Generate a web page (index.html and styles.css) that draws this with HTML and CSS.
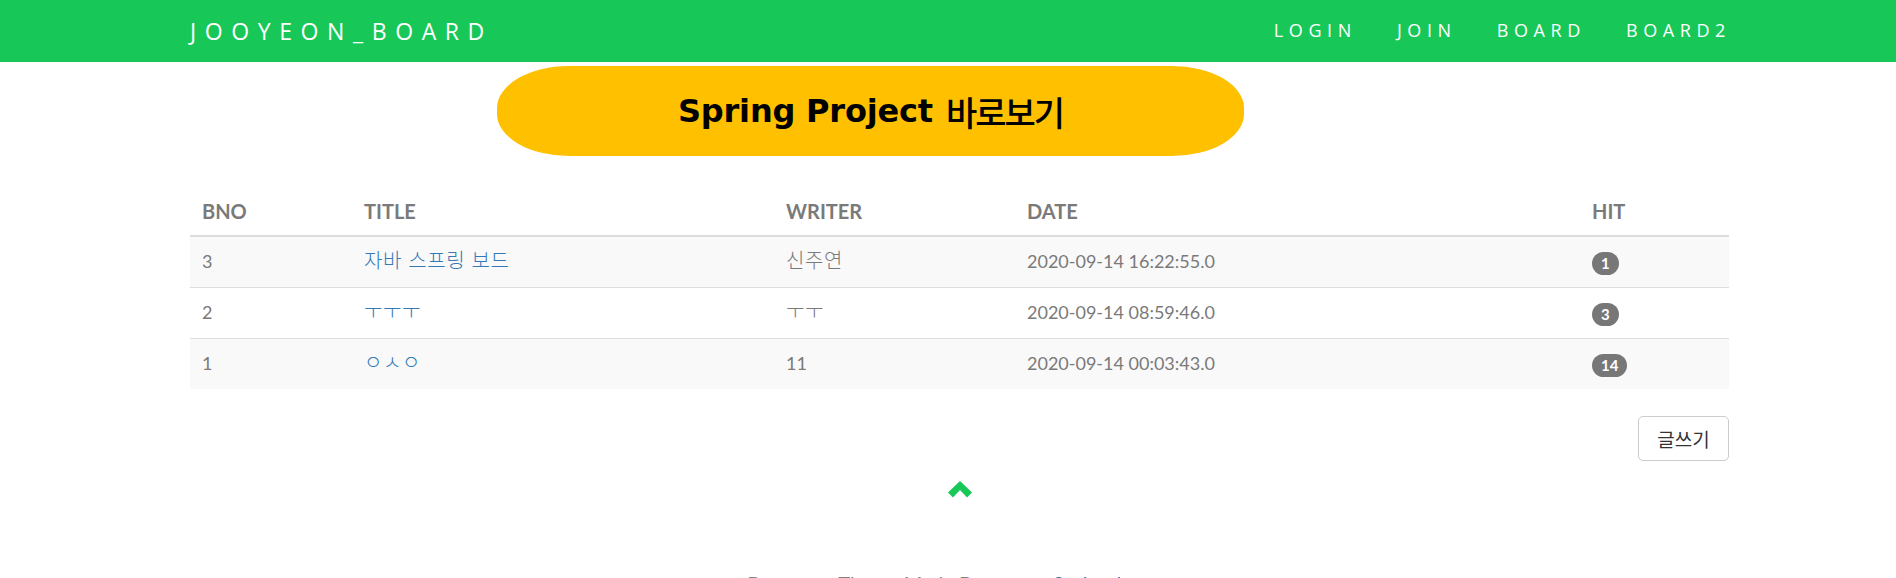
FILE: index.html
```html
<!DOCTYPE html>
<html lang="ko">
<head>
<meta charset="utf-8">
<title>JOOYEON_BOARD</title>
<link rel="stylesheet" href="styles.css">
</head>
<body>
<nav class="navbar">
  <div class="nav-inner">
    <a class="brand" href="#">JOOYEON_BOARD</a>
    <ul class="menu">
      <li><a href="#">LOGIN</a></li>
      <li><a href="#">JOIN</a></li>
      <li><a href="#">BOARD</a></li>
      <li><a href="#">BOARD2</a></li>
    </ul>
  </div>
</nav>

<main class="page">
  <div class="banner-row">
    <a class="banner" href="#"><b class="banner-en">Spring Project</b><span class="banner-ko">바로보기</span></a>
  </div>

  <table class="board">
    <thead>
      <tr>
        <th class="c-bno">BNO</th>
        <th class="c-title">TITLE</th>
        <th class="c-writer">WRITER</th>
        <th class="c-date">DATE</th>
        <th class="c-hit">HIT</th>
      </tr>
    </thead>
    <tbody>
      <tr>
        <td>3</td>
        <td><a class="link ko" href="#">자바 스프링 보드</a></td>
        <td><span class="ko">신주연</span></td>
        <td>2020-09-14 16:22:55.0</td>
        <td><span class="badge">1</span></td>
      </tr>
      <tr>
        <td>2</td>
        <td><a class="link ko" href="#">ㅜㅜㅜ</a></td>
        <td><span class="ko">ㅜㅜ</span></td>
        <td>2020-09-14 08:59:46.0</td>
        <td><span class="badge">3</span></td>
      </tr>
      <tr>
        <td>1</td>
        <td><a class="link ko" href="#">ㅇㅅㅇ</a></td>
        <td>11</td>
        <td>2020-09-14 00:03:43.0</td>
        <td><span class="badge">14</span></td>
      </tr>
    </tbody>
  </table>

  <div class="actions">
    <button class="btn" type="button">글쓰기</button>
  </div>
</main>

<footer class="footer">
  <a class="to-top" href="#" title="To Top">
    <svg class="chevron" width="24" height="17" viewBox="0 0 24 17"><polygon points="12,0 24,11.5 19,16.5 12,9 5,16.5 0,11.5" fill="#17c858"/></svg>
  </a>
  <p class="credit">Bootstrap Theme Made By <a class="link" href="#">www.w3schools.com</a></p>
</footer>
</body>
</html>
```

FILE: styles.css
```css
html, body {
  margin: 0;
  padding: 0;
}

body {
  font-family: "Lato", "Noto Sans CJK KR", sans-serif;
  color: #818181;
  background: #fff;
}

a {
  text-decoration: none;
}

/* ---------- navbar ---------- */
.navbar {
  background: #17c858;
  height: 62px;
}

.nav-inner {
  height: 100%;
  display: flex;
  align-items: center;
  justify-content: space-between;
  padding: 0 165px 0 190px;
  font-family: "Open Sans", "Noto Sans", sans-serif;
}

.brand {
  color: #fff;
  font-size: 23px;
  font-weight: 400;
  letter-spacing: 8.6px;
  line-height: 1;
}

.menu {
  list-style: none;
  margin: 0;
  padding: 0;
  display: flex;
  gap: 40px;
}

.menu a {
  color: #fff;
  font-size: 18px;
  letter-spacing: 5.6px;
  line-height: 1;
}

/* ---------- main ---------- */
.page {
  padding: 0 167px 0 190px;
}

.banner-row {
  display: flex;
  padding-left: 307px;
  padding-top: 4px;
}

.banner {
  width: 747px;
  height: 90px;
  background: #ffc000;
  border-radius: 72px / 42px;
  display: flex;
  align-items: center;
  justify-content: center;
  gap: 13px;
  color: #000;
}

.banner-en {
  font-family: "DejaVu Sans", sans-serif;
  font-weight: 700;
  font-size: 32px;
  letter-spacing: -0.2px;
}

.banner-ko {
  font-family: "Noto Sans CJK KR", sans-serif;
  font-weight: 500;
  font-size: 34px;
  letter-spacing: -2px;
}

.board {
  width: 100%;
  margin-top: 31px;
  border-collapse: collapse;
  table-layout: fixed;
}

.board th,
.board td {
  box-sizing: border-box;
}

.c-bno { width: 162px; }
.c-title { width: 422px; }
.c-writer { width: 241px; }
.c-date { width: 565px; }
.c-hit { width: 149px; }

.board th {
  text-align: left;
  padding: 12px;
  font-size: 20px;
  font-weight: 700;
  line-height: 24px;
  color: #7a7a7a;
  border-bottom: 2px solid #ddd;
}

.board td {
  padding: 12px;
  font-size: 18px;
  line-height: 25px;
  color: #7a7a7a;
  border-top: 1px solid #ddd;
}

.board tbody tr:nth-child(odd) {
  background: #f9f9f9;
}

.ko {
  font-family: "Noto Sans CJK KR", sans-serif;
  font-size: 20px;
  font-weight: 300;
  line-height: 20px;
  letter-spacing: 0.6px;
}

.link {
  color: #337ab7;
}

.badge {
  display: inline-block;
  background: #777;
  color: #fff;
  font-weight: 700;
  font-size: 15px;
  line-height: 1;
  padding: 4px 9px;
  border-radius: 12px;
  vertical-align: middle;
}

.actions {
  display: flex;
  justify-content: flex-end;
  margin-top: 27px;
}

.btn {
  width: 91px;
  height: 45px;
  padding: 0;
  background: #fff;
  border: 1px solid #ccc;
  border-radius: 5px;
  color: #333;
  font-family: "Noto Sans CJK KR", sans-serif;
  font-size: 19px;
  font-weight: 400;
}

/* ---------- footer ---------- */
.footer {
  padding: 20px 167px 0 190px;
  display: flex;
  flex-direction: column;
  align-items: center;
}

.to-top {
  display: block;
}

.chevron {
  display: block;
}

.credit {
  margin: 73px 0 0;
  font-size: 20px;
  line-height: 24px;
  color: #818181;
  white-space: nowrap;
}
```
